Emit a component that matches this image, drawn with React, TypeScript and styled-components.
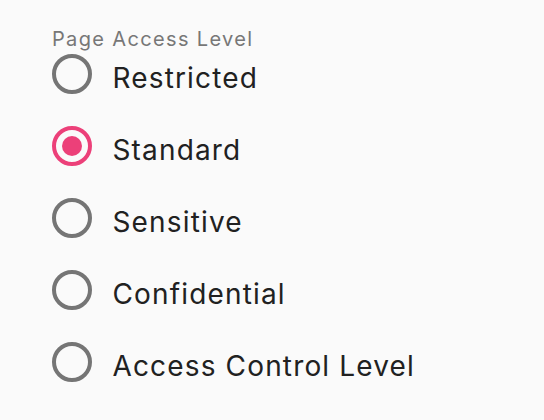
import styled, { createGlobalStyle } from 'styled-components'

const GlobalStyle = createGlobalStyle`
    html, body {
        margin: 0;
        background-color: #fafafa;
        font-family: Inter, Roboto, 'Liberation Sans', sans-serif;
    }
`

const levels = ['Restricted', 'Standard', 'Sensitive', 'Confidential', 'Access Control Level']
const selected = 'Standard'

const RadioIcon: React.FC<{ checked: boolean }> = ({ checked }) => (
    <Icon viewBox="0 0 24 24" $checked={checked}>
        <circle cx="12" cy="12" r="9" fill="none" stroke="currentColor" strokeWidth="2" />
        {checked && <circle cx="12" cy="12" r="5" fill="currentColor" />}
    </Icon>
)

export default function App() {
    return (
        <>
            <GlobalStyle />
            <Page>
                <Fieldset>
                    <Legend>Page Access Level</Legend>
                    <Group>
                        {levels.map((level) => (
                            <Option key={level}>
                                <RadioIcon checked={level === selected} />
                                <OptionText>{level}</OptionText>
                            </Option>
                        ))}
                    </Group>
                </Fieldset>
            </Page>
        </>
    )
}

const Page = styled.div`
    width: 544px;
    height: 420px;
    padding: 28px 0 0 52px;
    box-sizing: border-box;
`

const Fieldset = styled.div`
    display: flex;
    flex-direction: column;
`

const Legend = styled.div`
    font-size: 20px;
    line-height: 22px;
    letter-spacing: 1.35px;
    color: #777777;
`

const Group = styled.div`
    display: flex;
    flex-direction: column;
    gap: 24px;
    margin-left: -4.5px;
`

const Option = styled.label`
    display: flex;
    align-items: center;
    height: 48px;
    gap: 17px;
`

const Icon = styled.svg<{ $checked: boolean }>`
    width: 48px;
    height: 48px;
    flex-shrink: 0;
    color: ${(p) => (p.$checked ? '#ec4079' : '#757575')};
`

const OptionText = styled.span`
    font-size: 28px;
    letter-spacing: 1.15px;
    color: #212121;
    padding-top: 7px;
`
